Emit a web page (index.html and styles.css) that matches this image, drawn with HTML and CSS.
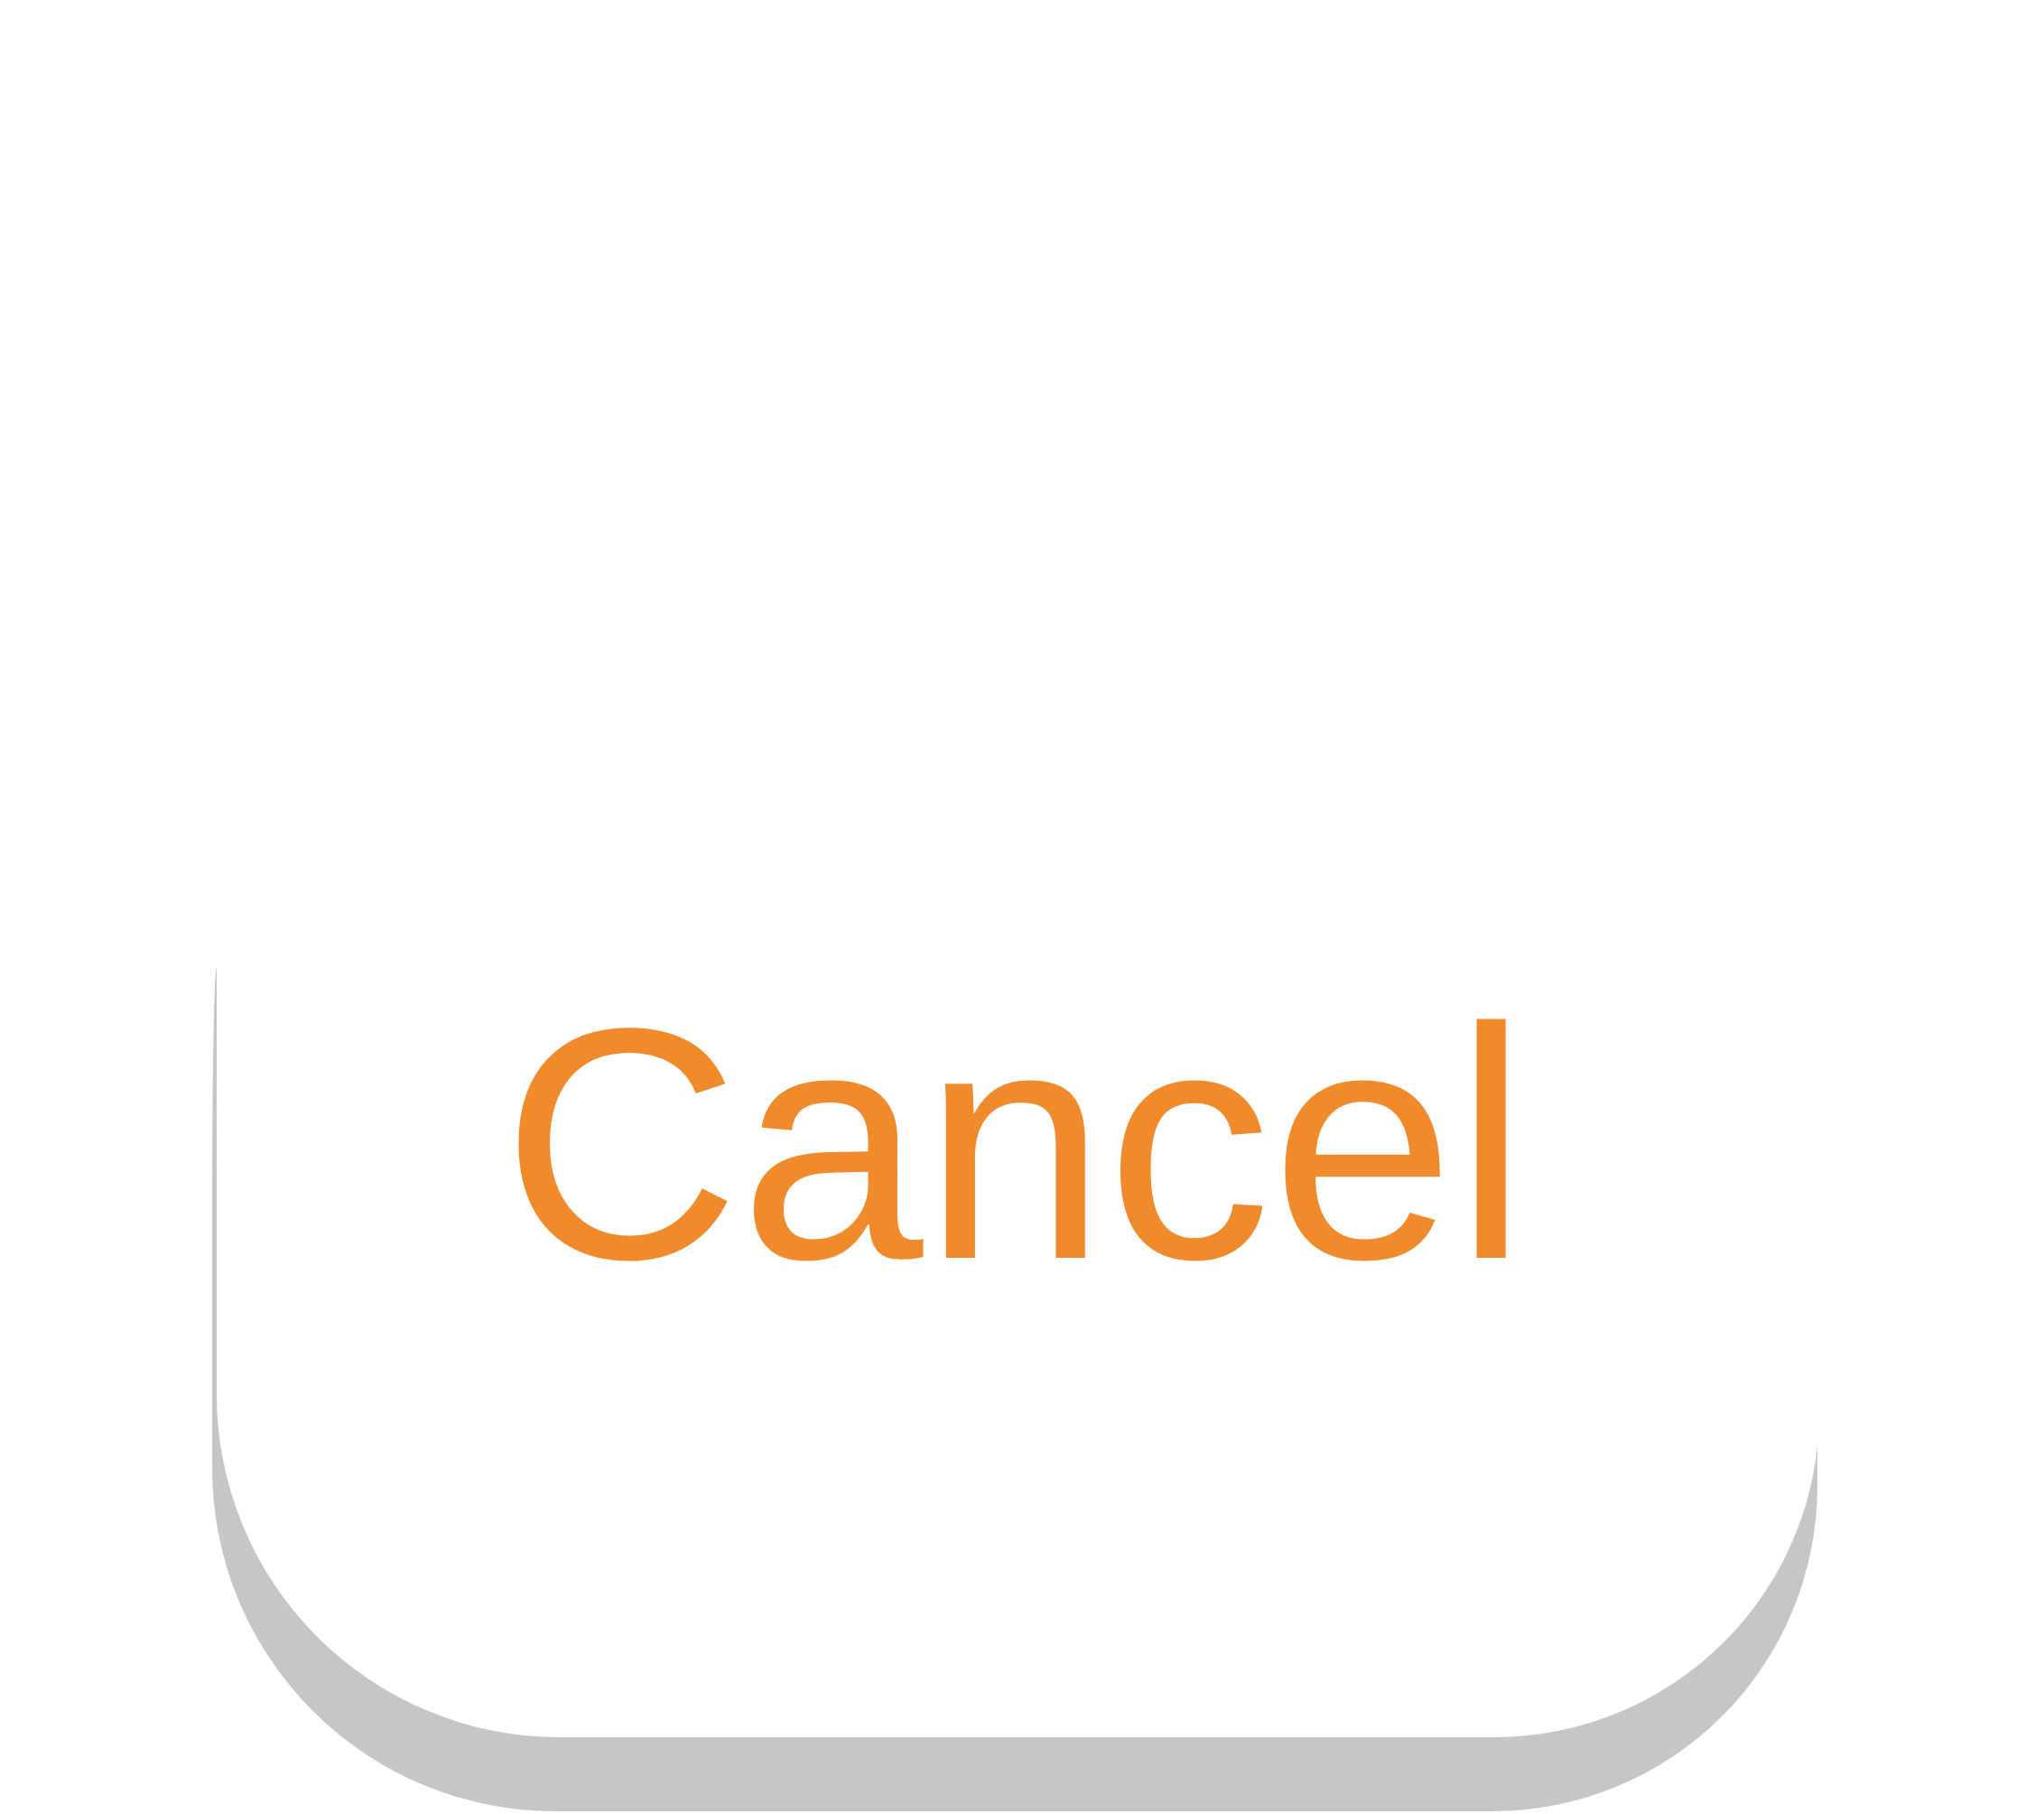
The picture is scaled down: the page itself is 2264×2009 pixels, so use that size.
FILE: index.html
```html
<!DOCTYPE html>
<html lang="en">
<head>
<meta charset="utf-8">
<title>Cancel</title>
<link rel="stylesheet" href="styles.css">
</head>
<body>
<div class="stage">
  <button class="cancel-btn" type="button"><span class="label">Cancel</span></button>
</div>
</body>
</html>
```
FILE: styles.css
```css
html {
  background: #ffffff;
}

html, body {
  margin: 0;
  padding: 0;
  height: 2009px;
  overflow: hidden;
}

.stage {
  display: flex;
  padding-left: 240px;
  isolation: isolate;
}

.cancel-btn {
  position: relative;
  display: flex;
  justify-content: center;
  align-items: flex-start;
  box-sizing: border-box;
  width: 1775px;
  height: 1924px;
  margin: 0;
  padding: 1084px 7px 0 0;
  border: none;
  background: #ffffff;
  border-radius: 0 0 360px 380px;
  font-family: "Liberation Sans", Arial, sans-serif;
  cursor: pointer;
}

.cancel-btn::before {
  content: "";
  position: absolute;
  left: -5px;
  top: 1072px;
  width: 1778px;
  height: 934px;
  background: #c6c6c6;
  border-radius: 5px 0 360px 380px / 260px 0 360px 380px;
  z-index: -1;
}

.label {
  font-size: 365px;
  line-height: 1;
  color: #f08a2b;
  font-weight: 400;
}
```
